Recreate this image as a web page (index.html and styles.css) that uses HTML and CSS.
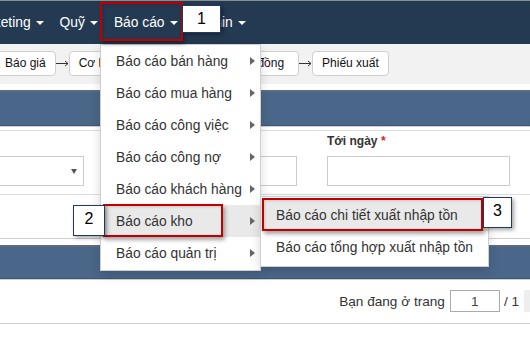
FILE: index.html
```html
<!DOCTYPE html>
<html lang="vi">
<head>
<meta charset="utf-8">
<title>Báo cáo kho</title>
<link rel="stylesheet" href="styles.css">
</head>
<body>
<div class="page">
  <nav class="navbar">
    <ul class="nav">
      <li class="nav-item first">Marketing<span class="caret"></span></li>
      <li class="nav-item">Quỹ<span class="caret"></span></li>
      <li class="nav-item">Báo cáo<span class="caret"></span></li>
      <li class="nav-item">Admin<span class="caret"></span></li>
    </ul>
  </nav>

  <div class="flowbar">
    <span class="step">Báo giá</span>
    <svg class="arrow" width="13" height="7" viewBox="0 0 13 7"><path d="M0 3.5H12M9 1l3 2.5L9 6" fill="none" stroke="#333" stroke-width="1"/></svg>
    <span class="step">Cơ hội</span>
    <svg class="arrow" width="13" height="7" viewBox="0 0 13 7"><path d="M0 3.5H12M9 1l3 2.5L9 6" fill="none" stroke="#333" stroke-width="1"/></svg>
    <span class="step mid">Đơn hàng</span>
    <svg class="arrow" width="13" height="7" viewBox="0 0 13 7"><path d="M0 3.5H12M9 1l3 2.5L9 6" fill="none" stroke="#333" stroke-width="1"/></svg>
    <span class="step contract">Hợp đồng</span>
    <svg class="arrow" width="13" height="7" viewBox="0 0 13 7"><path d="M0 3.5H12M9 1l3 2.5L9 6" fill="none" stroke="#333" stroke-width="1"/></svg>
    <span class="step">Phiếu xuất</span>
  </div>

  <div class="panel-bar"></div>

  <div class="filter">
    <div class="field">
      <label class="lbl hidden-lbl">Kho</label>
      <div class="select first-select"><span class="sel-caret"></span></div>
    </div>
    <div class="field">
      <label class="lbl">Từ ngày <span class="req">*</span></label>
      <div class="input"></div>
    </div>
    <div class="field">
      <label class="lbl">Tới ngày <span class="req">*</span></label>
      <div class="input"></div>
    </div>
  </div>

  <div class="spacer-block"></div>

  <div class="panel-bar second"></div>

  <div class="pager">
    <span class="pager-text">Bạn đang ở trang</span>
    <span class="pager-input">1</span>
    <span class="pager-total">/ 1</span>
    <span class="pager-btn"></span>
  </div>

  <!-- dropdown menu -->
  <div class="dropdown">
    <div class="dd-item">Báo cáo bán hàng<span class="rcaret"></span></div>
    <div class="dd-item">Báo cáo mua hàng<span class="rcaret"></span></div>
    <div class="dd-item">Báo cáo công việc<span class="rcaret"></span></div>
    <div class="dd-item">Báo cáo công nợ<span class="rcaret"></span></div>
    <div class="dd-item">Báo cáo khách hàng<span class="rcaret"></span></div>
    <div class="dd-item active">Báo cáo kho<span class="rcaret"></span></div>
    <div class="dd-item">Báo cáo quản trị<span class="rcaret"></span></div>
  </div>

  <div class="submenu">
    <div class="dd-item active">Báo cáo chi tiết xuất nhập tồn</div>
    <div class="dd-item">Báo cáo tổng hợp xuất nhập tồn</div>
  </div>

  <!-- annotations -->
  <div class="mark mark1"></div>
  <div class="num num1">1</div>
  <div class="mark mark2"></div>
  <div class="num num2">2</div>
  <div class="mark mark3"></div>
  <div class="num num3">3</div>
</div>
</body>
</html>
```

FILE: styles.css
```css
* { box-sizing: border-box; }
html, body { margin: 0; padding: 0; }
body {
  width: 530px;
  height: 341px;
  overflow: hidden;
  background: #fff;
  font-family: "Liberation Sans", Arial, sans-serif;
  color: #333;
}
.page {
  position: relative;
  width: 530px;
  height: 341px;
  overflow: hidden;
}

/* nav */
.navbar {
  height: 44px;
  background: #243a52;
  border-top: 1px solid #8c8c8c;
}
.nav {
  list-style: none;
  margin: 0 0 0 -39px;
  padding: 0;
  display: flex;
  height: 43px;
}
.nav-item {
  display: flex;
  align-items: center;
  padding: 0 7px 0 9px;
  color: #fff;
  font-size: 13.8px;
  white-space: nowrap;
}
.caret {
  display: inline-block;
  margin-left: 5px;
  width: 0;
  height: 0;
  border-top: 4px solid #fff;
  border-left: 4px solid transparent;
  border-right: 4px solid transparent;
  margin-top: 1px;
}

/* flow bar */
.flowbar {
  height: 40px;
  background: #f2f2f2;
  display: flex;
  align-items: center;
  margin-left: -5px;
  padding-bottom: 2px;
}
.step {
  display: inline-flex;
  align-items: center;
  height: 25px;
  padding: 0 9px;
  border: 1px solid #cfcfcf;
  border-radius: 4px;
  background: #fff;
  font-size: 12px;
  color: #111;
  white-space: nowrap;
  flex: none;
}
.step.mid { padding: 0 7px 0 8px; }
.step.contract { padding: 0 14px 0 9px; }
.arrow { flex: none; display: block; }

/* panel bars */
.panel-bar {
  margin-top: 6px;
  height: 36px;
  background: #4a6688;
  border-top: 2px solid #5d6c7d;
  border-bottom: 1px solid #3e5875;
  box-shadow: 0 1px 0 #cfcfcf;
}
.panel-bar.second {
  margin-top: 6px;
  height: 34px;
}

/* filter form */
.filter {
  margin-top: 4px;
  border-top: 1px solid #ddd;
  border-bottom: 1px solid #ddd;
  padding: 1px 0 8px;
  display: grid;
  grid-template-columns: 84px 183px 183px;
  column-gap: 30px;
}
.field { display: flex; flex-direction: column; }
.lbl {
  height: 18px;
  line-height: 18px;
  font-size: 12px;
  font-weight: bold;
  color: #333;
  margin-bottom: 6px;
}
.hidden-lbl { visibility: hidden; }
.req { color: #e02020; }
.input, .select {
  height: 30px;
  border: 1px solid #ccc;
  background: #fff;
}
.first-select {
  border-left: none;
  display: flex;
  align-items: center;
  justify-content: flex-end;
  padding-right: 6px;
}
.sel-caret {
  width: 0;
  height: 0;
  border-top: 5px solid #555;
  border-left: 3px solid transparent;
  border-right: 3px solid transparent;
}

.spacer-block {
  height: 44px;
  border-bottom: 1px solid #cfcfcf;
}

/* pager */
.pager {
  height: 44px;
  border-bottom: 1px solid #cfcfcf;
  margin-top: 1px;
  display: flex;
  align-items: center;
  justify-content: flex-end;
  font-size: 13.6px;
  color: #333;
  padding-bottom: 1px;
}
.pager-input {
  width: 50px;
  height: 22px;
  border: 1px solid #aaa;
  margin-left: 5px;
  display: flex;
  align-items: center;
  justify-content: center;
  color: #444;
}
.pager-total { margin-left: 4px; }
.pager-btn {
  width: 12px;
  height: 22px;
  background: #eee;
  margin-left: 5px;
  margin-right: -6px;
}

/* dropdown */
.dropdown, .submenu {
  position: absolute;
  background: #fff;
  border: 1px solid #cfcfcf;
  box-shadow: 0 4px 10px rgba(0,0,0,0.15);
}
.dropdown {
  left: 100px;
  top: 44px;
  width: 161px;
  padding: 0 0 1px;
}
.submenu {
  left: 260px;
  top: 196px;
  width: 229px;
  padding: 2px 0 3px;
}
.dd-item {
  height: 32px;
  display: flex;
  align-items: center;
  padding-left: 15px;
  font-size: 13.8px;
  color: #333;
  white-space: nowrap;
  position: relative;
}
.dd-item.active { background: #e9e9e9; }
.rcaret {
  position: absolute;
  right: 5px;
  top: 12px;
  width: 0;
  height: 0;
  border-left: 5px solid #666;
  border-top: 4px solid transparent;
  border-bottom: 4px solid transparent;
}

/* annotations */
.mark {
  position: absolute;
  border: 2px solid #c00000;
  box-shadow: 2px 3px 4px rgba(0,0,0,0.35), inset 1px 1px 3px rgba(0,0,0,0.15);
}
.mark1 { left: 100px; top: 2px; width: 83px; height: 39px; }
.mark2 { left: 103px; top: 204px; width: 120px; height: 33px; }
.mark3 { left: 262px; top: 198px; width: 221px; height: 33px; }
.num {
  position: absolute;
  background: #fff;
  border: 1px solid #1f3864;
  box-shadow: 2px 2px 4px rgba(0,0,0,0.35);
  font-family: "Liberation Sans", Arial, sans-serif;
  font-size: 16px;
  color: #000;
  text-align: center;
  padding-top: 4px;
  line-height: 18px;
}
.num1 { left: 182px; top: 5px; width: 39px; height: 28px; }
.num2 { left: 73px; top: 205px; width: 32px; height: 31px; }
.num3 { left: 483px; top: 197px; width: 29px; height: 31px; }
```
